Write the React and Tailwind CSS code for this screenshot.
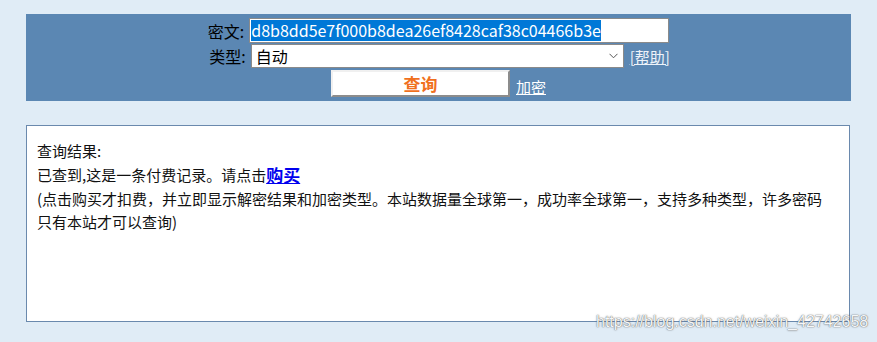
export default function App() {
  const cjk = { fontFamily: '"Noto Sans CJK SC", "Noto Sans", sans-serif' };
  return (
    <div
      className="relative w-[877px] h-[342px] overflow-hidden bg-[#e0ecf6] px-[26px] pt-[14px]"
      style={cjk}
    >
      <div className="flex h-[87px] w-[825px] flex-col items-center bg-[#5b87b3] pt-[4px]">
        <div className="flex h-[25px] items-center">
          <span className="mr-[5px] text-[16px] leading-none text-black">密文:</span>
          <div className="flex h-[25px] w-[420px] items-center border border-[#8a8a8a] bg-white pl-[1px]">
            <span className="bg-[#0078d7] text-[16px] leading-[21px] text-white">
              d8b8dd5e7f000b8dea26ef8428caf38c04466b3e
            </span>
          </div>
        </div>
        <div className="mt-[1px] flex h-[24px] items-center pl-[2px]">
          <span className="mr-[5px] text-[16px] leading-none text-black">类型:</span>
          <div className="flex h-[24px] w-[373px] items-center justify-between border border-[#8a8a8a] bg-white pl-[4px] pr-[4px]">
            <span className="text-[16px] leading-none text-black">自动</span>
            <svg width="9" height="6" viewBox="0 0 9 6" className="mr-[1px]">
              <path d="M0.5 0.8 L4.5 4.8 L8.5 0.8" fill="none" stroke="#555" strokeWidth="1" />
            </svg>
          </div>
          <a className="ml-[6px] text-[15px] leading-none text-[#eef3f9] underline">[帮助]</a>
        </div>
        <div className="mt-[2px] flex h-[27px] items-center">
          <div className="flex h-[27px] w-[179px] items-center justify-center border-2 border-t-[#f0f0f0] border-l-[#f0f0f0] border-r-[#8c8c8c] border-b-[#8c8c8c] bg-white">
            <span className="text-[17px] font-bold leading-none text-[#f0701e]">查询</span>
          </div>
          <a className="ml-[6px] mt-[6px] text-[15px] leading-none text-white underline">加密</a>
        </div>
      </div>

      <div className="mt-[24px] h-[197px] w-[824px] border border-[#6a89ad] bg-white pl-[10px] pt-[14px] text-[15px] text-[#111]">
        <div className="leading-[22px]">查询结果:</div>
        <div className="flex h-[25px] items-center">
          <span className="leading-[22px]">已查到,这是一条付费记录。请点击</span>
          <a className="text-[17px] font-bold leading-[22px] text-[#0000ee] underline">购买</a>
        </div>
        <div className="leading-[23px]">
          (点击购买才扣费，并立即显示解密结果和加密类型。本站数据量全球第一，成功率全球第一，支持多种类型，许多密码
        </div>
        <div className="leading-[23px]">只有本站才可以查询)</div>
      </div>

      <div
        className="absolute left-[596px] top-[313px] text-[16px] leading-[18px] text-[#f4f6f9] [text-shadow:0_0_1px_rgba(60,60,60,0.9),0_0_2px_rgba(90,90,90,0.5)]"
        style={{ fontFamily: '"Liberation Sans", Arial, sans-serif' }}
      >
        https://blog.csdn.net/weixin_42742658
      </div>
    </div>
  );
}
